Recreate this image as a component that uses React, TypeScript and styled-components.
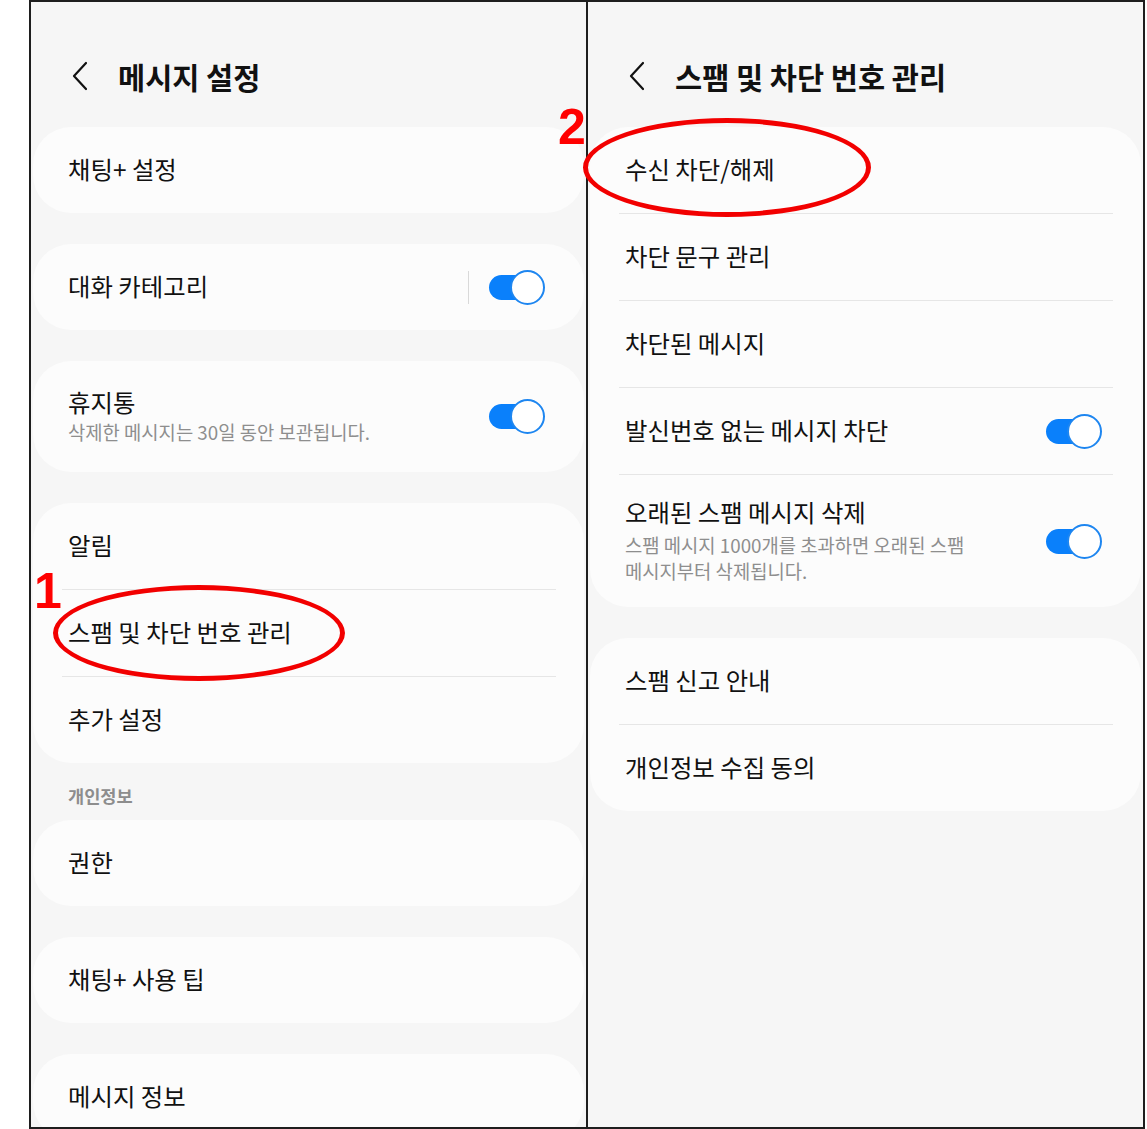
import React from 'react';
import styled, { createGlobalStyle } from 'styled-components';

const GlobalStyle = createGlobalStyle`
  html, body {
    margin: 0;
    padding: 0;
    background: #ffffff;
  }
  body {
    font-family: "Noto Sans CJK KR", "Noto Sans", sans-serif;
    color: #111111;
  }
`;

const Frame = styled.div`
  position: relative;
  box-sizing: border-box;
  margin-left: 29px;
  width: 1116px;
  height: 1129px;
  border: 2px solid #1e1e1e;
  display: flex;
`;

const Panel = styled.section<{ $divider?: boolean }>`
  box-sizing: border-box;
  flex: 0 0 ${p => (p.$divider ? 557 : 555)}px;
  height: 100%;
  overflow: hidden;
  background: #f6f6f6;
  border-left: ${p => (p.$divider ? '2px solid #1e1e1e' : 'none')};
  padding: 0 2px;
`;

const Header = styled.header`
  box-sizing: border-box;
  height: 125px;
  padding: 53px 0 0 39px;
  display: flex;
  align-items: flex-start;
  gap: 31px;
`;

const BackIcon = styled.svg`
  width: 15px;
  height: 42px;
  flex: none;
`;

const Title = styled.h1`
  margin: 0;
  font-size: 29.5px;
  line-height: 42px;
  font-weight: 700;
  letter-spacing: 0;
  color: #111111;
`;

const Card = styled.div`
  background: #fcfcfc;
  border-radius: 38px;
  overflow: hidden;

  & + & {
    margin-top: 31px;
  }
`;

const SectionLabel = styled.div`
  margin-top: 20px;
  height: 26px;
  line-height: 26px;
  padding-left: 35px;
  font-size: 17.6px;
  font-weight: 700;
  color: #8d8d8d;

  & + ${Card} {
    margin-top: 11px;
  }
`;

const Row = styled.div<{ $height?: number }>`
  box-sizing: border-box;
  height: ${p => p.$height ?? 86}px;
  padding: 0 39px 3px 35px;
  display: flex;
  align-items: center;
  justify-content: space-between;
  gap: 16px;
`;

const Divider = styled.div`
  height: 1px;
  margin: 0 28px 0 29px;
  background: #e6e6e6;
`;

const TextBlock = styled.div`
  display: flex;
  flex-direction: column;
  min-width: 0;
`;

const Label = styled.div`
  font-size: 24.4px;
  line-height: 31px;
  color: #111111;
  white-space: nowrap;
`;

const Sub = styled.div<{ $gap?: number }>`
  margin-top: ${p => p.$gap ?? 2}px;
  font-size: 18.8px;
  line-height: 26px;
  color: #8e8e8e;
  white-space: nowrap;
`;

const Trailing = styled.div`
  display: flex;
  align-items: center;
  gap: 20px;
  flex: none;
  margin-top: 3px;
`;

const VLine = styled.div`
  width: 1px;
  height: 33px;
  background: #d9d9d9;
`;

const Switch = styled.div<{ $nudge?: boolean }>`
  position: relative;
  width: 56px;
  height: 35px;
  flex: none;
  margin-top: ${p => (p.$nudge ? 3 : 0)}px;
`;

const Track = styled.div`
  position: absolute;
  left: 0;
  top: 5px;
  width: 46px;
  height: 25px;
  border-radius: 13px;
  background: #0a80fb;
`;

const Knob = styled.div`
  position: absolute;
  right: 0;
  top: 0;
  box-sizing: border-box;
  width: 35px;
  height: 35px;
  border-radius: 50%;
  background: #ffffff;
  border: 2px solid #1e86f0;
`;

const Mark = styled.div<{ $x: number; $y: number }>`
  position: absolute;
  left: ${p => p.$x}px;
  top: ${p => p.$y}px;
  font-family: "Liberation Sans", Arial, sans-serif;
  font-weight: 700;
  font-size: 50px;
  line-height: 1;
  color: #ff0000;
  z-index: 2;
`;

const Ring = styled.div<{ $x: number; $y: number; $w: number; $h: number }>`
  position: absolute;
  box-sizing: border-box;
  left: ${p => p.$x}px;
  top: ${p => p.$y}px;
  width: ${p => p.$w}px;
  height: ${p => p.$h}px;
  border: 5px solid #f20000;
  border-radius: 50%;
  z-index: 2;
  pointer-events: none;
`;

const Toggle = ({ nudge = true }: { nudge?: boolean }) => (
  <Switch $nudge={nudge}>
    <Track />
    <Knob />
  </Switch>
);

const Back = () => (
  <BackIcon viewBox="0 0 15 42">
    <polyline
      points="14,8 2,21 14,34"
      fill="none"
      stroke="#111"
      strokeWidth="2.2"
      strokeLinecap="round"
      strokeLinejoin="round"
    />
  </BackIcon>
);

const MessageSettings = () => (
  <Panel>
    <Header>
      <Back />
      <Title>메시지 설정</Title>
    </Header>

    <Card>
      <Row>
        <Label>채팅+ 설정</Label>
      </Row>
    </Card>

    <Card>
      <Row>
        <Label>대화 카테고리</Label>
        <Trailing>
          <VLine />
          <Toggle nudge={false} />
        </Trailing>
      </Row>
    </Card>

    <Card>
      <Row $height={111}>
        <TextBlock>
          <Label>휴지통</Label>
          <Sub>삭제한 메시지는 30일 동안 보관됩니다.</Sub>
        </TextBlock>
        <Toggle />
      </Row>
    </Card>

    <Card>
      <Row>
        <Label>알림</Label>
      </Row>
      <Divider />
      <Row>
        <Label>스팸 및 차단 번호 관리</Label>
      </Row>
      <Divider />
      <Row>
        <Label>추가 설정</Label>
      </Row>
    </Card>

    <SectionLabel>개인정보</SectionLabel>
    <Card>
      <Row>
        <Label>권한</Label>
      </Row>
    </Card>

    <Card>
      <Row>
        <Label>채팅+ 사용 팁</Label>
      </Row>
    </Card>

    <Card>
      <Row>
        <Label>메시지 정보</Label>
      </Row>
    </Card>
  </Panel>
);

const SpamSettings = () => (
  <Panel $divider>
    <Header>
      <Back />
      <Title>스팸 및 차단 번호 관리</Title>
    </Header>

    <Card>
      <Row>
        <Label>수신 차단/해제</Label>
      </Row>
      <Divider />
      <Row>
        <Label>차단 문구 관리</Label>
      </Row>
      <Divider />
      <Row>
        <Label>차단된 메시지</Label>
      </Row>
      <Divider />
      <Row>
        <Label>발신번호 없는 메시지 차단</Label>
        <Toggle />
      </Row>
      <Divider />
      <Row $height={132}>
        <TextBlock>
          <Label>오래된 스팸 메시지 삭제</Label>
          <Sub $gap={5}>
            스팸 메시지 1000개를 초과하면 오래된 스팸
            <br />
            메시지부터 삭제됩니다.
          </Sub>
        </TextBlock>
        <Toggle />
      </Row>
    </Card>

    <Card>
      <Row>
        <Label>스팸 신고 안내</Label>
      </Row>
      <Divider />
      <Row>
        <Label>개인정보 수집 동의</Label>
      </Row>
    </Card>
  </Panel>
);

export default function App() {
  return (
    <>
      <GlobalStyle />
      <Frame>
        <MessageSettings />
        <SpamSettings />

        <Mark $x={3} $y={564}>1</Mark>
        <Ring $x={22} $y={583} $w={292} $h={96} />

        <Mark $x={527} $y={100}>2</Mark>
        <Ring $x={552} $y={116} $w={288} $h={99} />
      </Frame>
    </>
  );
}
